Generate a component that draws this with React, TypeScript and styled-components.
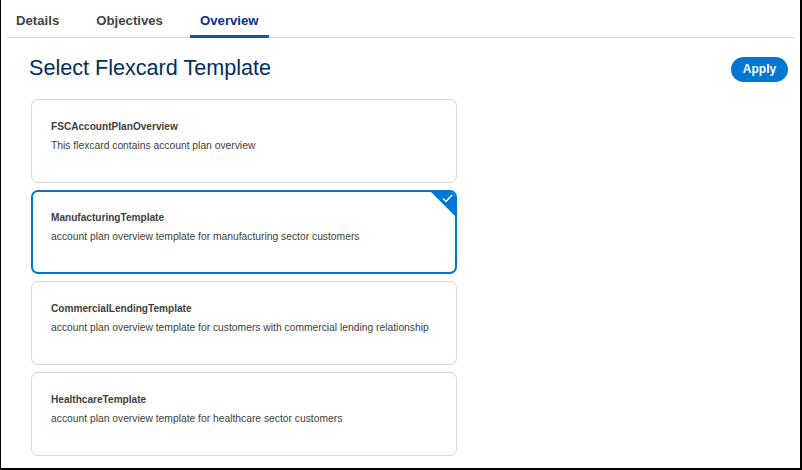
import React, { useState } from "react";
import styled, { createGlobalStyle } from "styled-components";

const Global = createGlobalStyle`
  html, body { margin: 0; padding: 0; background: #fff; }
  body { font-family: "Liberation Sans", Arial, sans-serif; }
  * { box-sizing: border-box; }
`;

const Frame = styled.div`
  width: 802px;
  height: 470px;
  border-left: 1px solid #000;
  border-right: 2px solid #000;
  border-bottom: 2px solid #000;
  background: #fff;
  display: flex;
  flex-direction: column;
  overflow: hidden;
`;

const TabBar = styled.div`
  display: flex;
  margin: 0 6px 0 6px;
  border-bottom: 1px solid #d8d8d8;
  height: 38px;
`;

const Tab = styled.div<{ $active?: boolean }>`
  position: relative;
  font-size: 13.2px;
  font-weight: 700;
  color: ${(p) => (p.$active ? "#0b2f8e" : "#444")};
  padding: 13px 10px 0 10px;
  margin-right: ${(p) => (p.$active ? "0" : "17px")};
  &:first-child { padding-left: 9px; }
  ${(p) =>
    p.$active &&
    `&::after { content: ""; position: absolute; left: 0; right: 0; bottom: -1px; height: 3px; background: #0b5cab; }`}
`;

const Content = styled.div`
  padding: 16px 13px 0 28px;
  display: flex;
  flex-direction: column;
`;

const HeaderRow = styled.div`
  display: flex;
  align-items: center;
  justify-content: space-between;
  height: 28px;
  margin-bottom: 17px;
`;

const Title = styled.h1`
  margin: 0;
  font-size: 21.6px;
  font-weight: 400;
  color: #032d60;
`;

const ApplyButton = styled.button`
  border: none;
  background: #0176d3;
  color: #fff;
  font-family: inherit;
  font-weight: 700;
  font-size: 12px;
  height: 25px;
  width: 57px;
  border-radius: 13px;
  cursor: pointer;
  margin-top: 2px;
  margin-right: -1px;
`;

const CardList = styled.div`
  display: flex;
  flex-direction: column;
  gap: 7px;
  width: 426px;
  margin-left: 2px;
`;

const Card = styled.div<{ $selected?: boolean }>`
  position: relative;
  height: 84px;
  border: ${(p) => (p.$selected ? "2px solid #0176d3" : "1px solid #d9d9d9")};
  border-radius: 7px;
  padding: ${(p) => (p.$selected ? "19px 18px" : "20px 19px")};
  overflow: hidden;
  cursor: pointer;
  background: #fff;
`;

const CardName = styled.div`
  font-size: 10.1px;
  font-weight: 700;
  color: #3e3e3c;
  line-height: 14px;
`;

const CardDesc = styled.div`
  font-size: 10.3px;
  color: #3e3e3c;
  line-height: 14px;
  margin-top: 5px;
  white-space: nowrap;
`;

const Corner = styled.div`
  position: absolute;
  top: 0;
  right: 0;
  width: 0;
  height: 0;
  border-top: 24px solid #0176d3;
  border-left: 24px solid transparent;
`;

const Check = styled.svg`
  position: absolute;
  top: 2px;
  right: 2px;
`;

const templates = [
  { name: "FSCAccountPlanOverview", desc: "This flexcard contains account plan overview" },
  { name: "ManufacturingTemplate", desc: "account plan overview template for manufacturing sector customers" },
  { name: "CommercialLendingTemplate", desc: "account plan overview template for customers with commercial lending relationship" },
  { name: "HealthcareTemplate", desc: "account plan overview template for healthcare sector customers" },
];

export default function App() {
  const [selected, setSelected] = useState(1);
  return (
    <>
      <Global />
      <Frame>
        <TabBar>
          <Tab>Details</Tab>
          <Tab>Objectives</Tab>
          <Tab $active>Overview</Tab>
        </TabBar>
        <Content>
          <HeaderRow>
            <Title>Select Flexcard Template</Title>
            <ApplyButton>Apply</ApplyButton>
          </HeaderRow>
          <CardList>
            {templates.map((t, i) => (
              <Card key={t.name} $selected={i === selected} onClick={() => setSelected(i)}>
                <CardName>{t.name}</CardName>
                <CardDesc>{t.desc}</CardDesc>
                {i === selected && (
                  <>
                    <Corner />
                    <Check width="11" height="9" viewBox="0 0 11 9">
                      <path d="M1 4.5 L4 7.5 L10 1" fill="none" stroke="#fff" strokeWidth="1.5" />
                    </Check>
                  </>
                )}
              </Card>
            ))}
          </CardList>
        </Content>
      </Frame>
    </>
  );
}
